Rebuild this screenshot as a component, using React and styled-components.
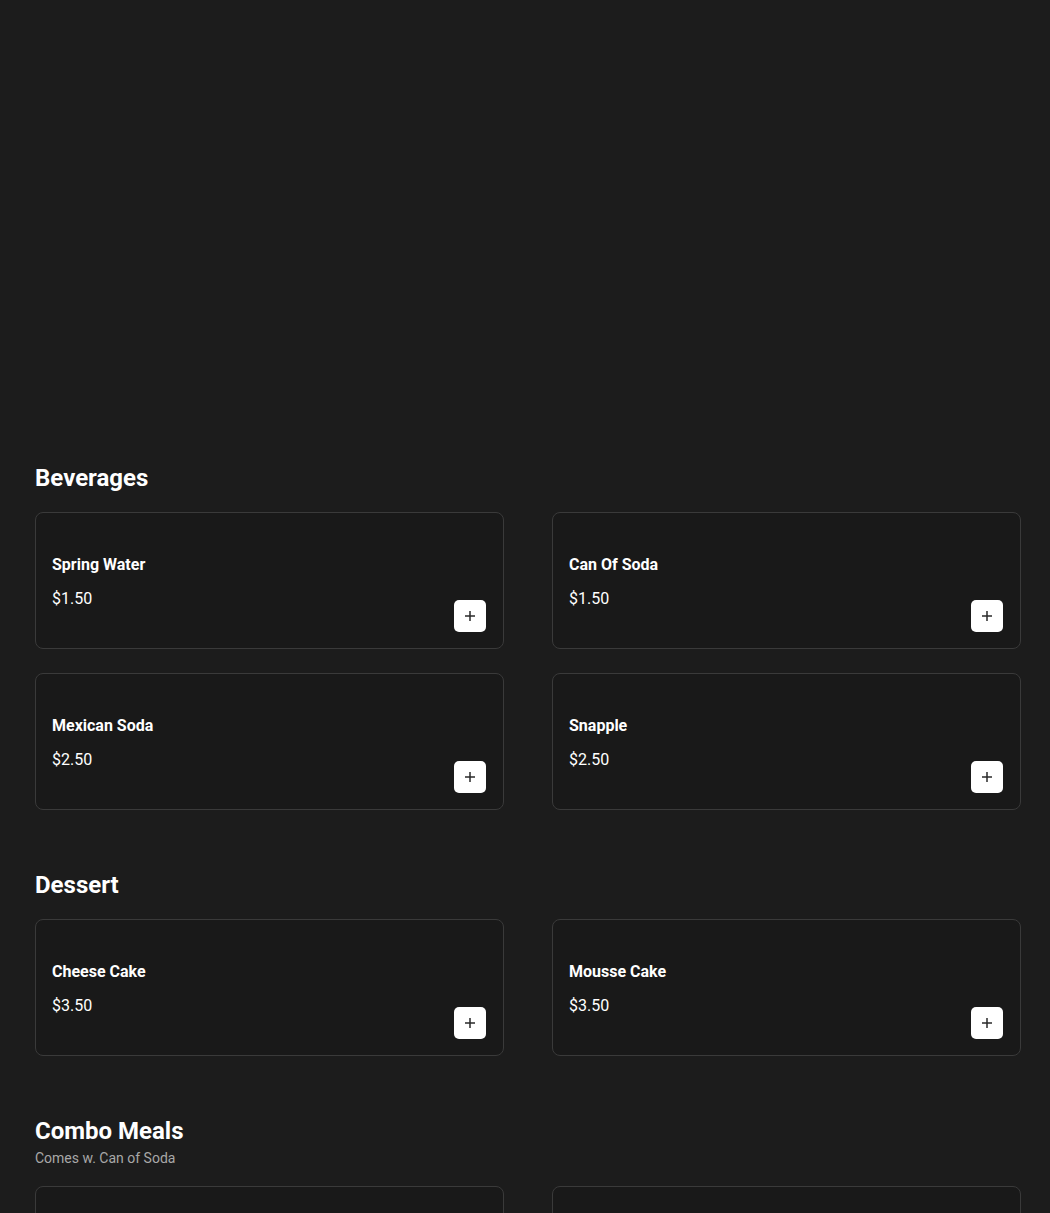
import React from 'react';
import styled, { createGlobalStyle } from 'styled-components';

const GlobalStyle = createGlobalStyle`
  * {
    box-sizing: border-box;
  }

  body {
    margin: 0;
    background-color: #1c1c1c;
    font-family: Roboto, 'Liberation Sans', Arial, sans-serif;
    color: #fff;
  }
`;

const Page = styled.div`
  min-height: 100vh;
  background-color: #1c1c1c;
  padding: 0 29px 80px 35px;
`;

const Hero = styled.div`
  height: 462px;
`;

const Section = styled.section`
  & + & {
    margin-top: 59px;
  }
`;

const SectionHeader = styled.div`
  margin-bottom: 18px;
`;

const SectionTitle = styled.h2`
  margin: 0;
  font-size: 24px;
  line-height: 32px;
  font-weight: 700;
  color: #fff;
`;

const SectionNote = styled.p`
  margin: 2px 0 0;
  font-size: 14px;
  line-height: 19px;
  color: #a8a8a8;
`;

const Grid = styled.div`
  display: grid;
  grid-template-columns: 1fr 1fr;
  column-gap: 48px;
  row-gap: 24px;
`;

const Card = styled.div`
  display: flex;
  justify-content: space-between;
  height: 137px;
  padding: 16px 17px 16px 16px;
  background-color: #191919;
  border: 1px solid #3a3a3a;
  border-radius: 8px;
`;

const Info = styled.div`
  display: flex;
  flex-direction: column;
  padding-top: 26px;
`;

const Name = styled.div`
  font-size: 16px;
  line-height: 20px;
  font-weight: 700;
  color: #fff;
`;

const Price = styled.div`
  margin-top: 12px;
  font-size: 16px;
  line-height: 24px;
  color: #fff;
`;

const AddButton = styled.button`
  align-self: flex-end;
  display: flex;
  align-items: center;
  justify-content: center;
  width: 32px;
  height: 32px;
  padding: 0;
  border: none;
  border-radius: 5px;
  background-color: #fff;
  color: #2a2a2a;
  cursor: pointer;
`;

const PlusIcon = () => (
  <svg width="10" height="10" viewBox="0 0 10 10" fill="none">
    <path d="M5 0v10M0 5h10" stroke="currentColor" strokeWidth="1.5" />
  </svg>
);

const menu = [
  {
    title: 'Beverages',
    items: [
      { name: 'Spring Water', price: 1.5 },
      { name: 'Can Of Soda', price: 1.5 },
      { name: 'Mexican Soda', price: 2.5 },
      { name: 'Snapple', price: 2.5 },
    ],
  },
  {
    title: 'Dessert',
    items: [
      { name: 'Cheese Cake', price: 3.5 },
      { name: 'Mousse Cake', price: 3.5 },
    ],
  },
  {
    title: 'Combo Meals',
    note: 'Comes w. Can of Soda',
    items: [
      { name: 'Burger Combo', price: 12.5 },
      { name: 'Chicken Sandwich Combo', price: 12.5 },
    ],
  },
];

const MenuItem = ({ name, price }) => (
  <Card>
    <Info>
      <Name>{name}</Name>
      <Price>${price.toFixed(2)}</Price>
    </Info>
    <AddButton aria-label={`Add ${name}`}>
      <PlusIcon />
    </AddButton>
  </Card>
);

export default function App() {
  return (
    <>
      <GlobalStyle />
      <Page>
        <Hero />
        {menu.map((section) => (
          <Section key={section.title}>
            <SectionHeader>
              <SectionTitle>{section.title}</SectionTitle>
              {section.note && <SectionNote>{section.note}</SectionNote>}
            </SectionHeader>
            <Grid>
              {section.items.map((item) => (
                <MenuItem key={item.name} {...item} />
              ))}
            </Grid>
          </Section>
        ))}
      </Page>
    </>
  );
}
